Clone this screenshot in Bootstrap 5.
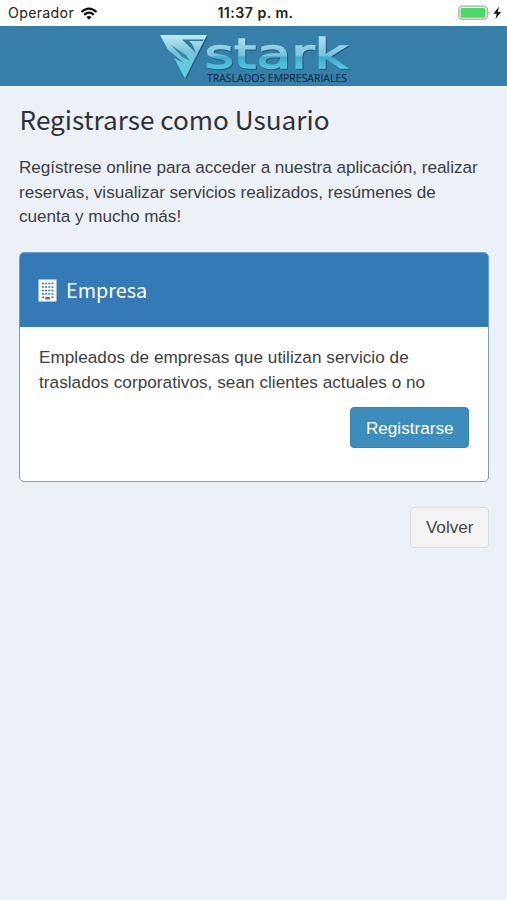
<!DOCTYPE html>
<html lang="es">
<head>
<meta charset="utf-8">
<meta name="viewport" content="width=device-width, initial-scale=1">
<title>Registrarse como Usuario</title>
<link href="https://cdn.jsdelivr.net/npm/bootstrap@5.3.0/dist/css/bootstrap.min.css" rel="stylesheet">
<style>
body{background:#ecf0f7;color:#3b3e42;font-family:"Liberation Sans",Arial,sans-serif;font-size:17.14px;line-height:24.5px;min-height:900px}
.status-bar{height:26px;font-family:Inter,sans-serif;font-size:14.2px;line-height:26px;color:#222;padding:0 4px 0 8px}
.status-bar>*{flex:1 1 0}
.carrier{letter-spacing:.3px}
.status-time{font-weight:600;letter-spacing:.45px}
.wifi-icon{margin-left:6px}
.brand-bar{height:60px;background:#367fa9}
.wordmark{filter:drop-shadow(1px 1px .5px #245876)}
.content-area{padding:16px 18px 0 19px}
.title-font{font-family:"Noto Sans CJK SC",sans-serif;font-weight:400}
.page-title{font-size:26.15px;line-height:35px;color:#2f3236;margin-bottom:18px;padding-left:.6px}
.intro{letter-spacing:-.035px}
.panel-company{border:1.5px solid #6ba1d0;border-radius:5px;height:230px;margin-top:-1px;overflow:hidden}
.panel-company .card-header{background:#337ab7;height:74px;padding:1px 18px 0;color:#fff;border:0;border-radius:0}
.panel-title{font-size:19.8px;line-height:30px;margin-left:9px}
.panel-company .card-body{padding:18.5px 19px 0 19px}
.panel-text{letter-spacing:.05px;margin-bottom:13px}
.btn-flat{font-size:17.14px;line-height:24px;border-radius:4px;padding:7.5px 14.5px}
.btn-register{background:#3c8dbc;border-color:#3784b1;color:#fff}
.btn-back{background:#f4f4f4;border-color:#ddd;color:#444}
.back-row{margin-top:25px}
</style>
<script src="https://cdn.jsdelivr.net/npm/bootstrap@5.3.0/dist/js/bootstrap.bundle.min.js"></script>
</head>
<body>
<div class="status-bar bg-white d-flex align-items-center">
  <div class="d-flex align-items-center"><span class="carrier">Operador</span>
    <svg class="wifi-icon" width="18" height="13" viewBox="0 0 17 13" fill="none" stroke="#111" stroke-width="2.3"><path d="M1 5Q8.500-1.800 16 5M3.700 7.800Q8.500 3.500 13.300 7.800"/><path d="M5.900 10Q8.500 7.900 11.100 10L8.500 12.700Z" fill="#111" stroke="none"/></svg>
  </div>
  <div class="status-time text-center">11:37 p. m.</div>
  <div class="d-flex align-items-center justify-content-end">
    <svg width="45" height="16" viewBox="0 0 45 16"><rect x=".8" y="1.300" width="28.500" height="13" rx="3.500" fill="#fff" stroke="#b5b5b5" stroke-width="1.500"/><rect x="2.500" y="3" width="25" height="9.700" rx="1.500" fill="#4cd964"/><path d="M30.500 6q2 1.800 0 3.700z" fill="#999"/><path d="M41 1.500L35.500 8.700H38.700L37.500 14L43 6.900H39.700Z" fill="#111"/></svg>
  </div>
</div>
<header class="brand-bar d-flex justify-content-center">
  <svg width="200" height="60" viewBox="0 0 200 60" role="img" aria-label="Stark Traslados Empresariales">
    <defs>
      <linearGradient id="ice" x1="0" y1="8" x2="0" y2="53" gradientUnits="userSpaceOnUse"><stop offset="0" stop-color="#c5edf5"/><stop offset=".4" stop-color="#78c4da"/><stop offset="1" stop-color="#4fd3e4"/></linearGradient>
      <linearGradient id="ice-text" x1="0" y1="9" x2="0" y2="43" gradientUnits="userSpaceOnUse"><stop offset="0" stop-color="#b5e1ef"/><stop offset=".6" stop-color="#78c4dc"/><stop offset=".65" stop-color="#3eabcc"/><stop offset="1" stop-color="#52cbdf"/></linearGradient>
    </defs>
    <g class="wordmark">
      <path d="M6 9H53L31 52.500L20 32L30 37L14 24Z" fill="url(#ice)"/>
      <text x="50.500" y="41.800" font-family="DejaVu Sans, sans-serif" font-size="41" textLength="143" lengthAdjust="spacingAndGlyphs" fill="url(#ice-text)" stroke="url(#ice-text)" stroke-width="1.300">stark</text>
    </g>
    <path d="M50 13.500H28L42 27L38 18L35 15H49Z" fill="#2f779d"/>
    <path d="M17 19L32 29L36 35L28 31Z" fill="#3c89ad"/>
    <text x="53" y="56" font-family="Open Sans, sans-serif" font-size="10.500" textLength="140" lengthAdjust="spacingAndGlyphs" fill="#0b243c">TRASLADOS EMPRESARIALES</text>
  </svg>
</header>
<main class="content-area">
  <h1 class="title-font page-title">Registrarse como Usuario</h1>
  <p class="intro mb-4">Regístrese online para acceder a nuestra aplicación, realizar reservas, visualizar servicios realizados, resúmenes de cuenta y mucho más!</p>
  <section class="card panel-company">
    <div class="card-header d-flex align-items-center">
      <svg class="flex-shrink-0" width="19" height="23" viewBox="0 0 19 23"><path d="M.5.500H18.500V22.500H.500Z" fill="#fff"/><path d="M4 4.500H15.500M4 8H15.500M4 11.500H15.500M4 15H15.500" stroke="#337ab7" stroke-width="1.700" stroke-dasharray="2 1.150"/><path d="M4 18.200H6M13.400 18.200H15.500" stroke="#337ab7" stroke-width="1.600"/><path d="M7.200 18H12V20.500H7.200Z" fill="#337ab7"/></svg>
      <h2 class="title-font panel-title mb-0">Empresa</h2>
    </div>
    <div class="card-body">
      <p class="panel-text">Empleados de empresas que utilizan servicio de traslados corporativos, sean clientes actuales o no</p>
      <div class="d-flex justify-content-end"><button type="button" class="btn btn-flat btn-register">Registrarse</button></div>
    </div>
  </section>
  <div class="back-row d-flex justify-content-end"><button type="button" class="btn btn-flat btn-back">Volver</button></div>
</main>
</body>
</html>
